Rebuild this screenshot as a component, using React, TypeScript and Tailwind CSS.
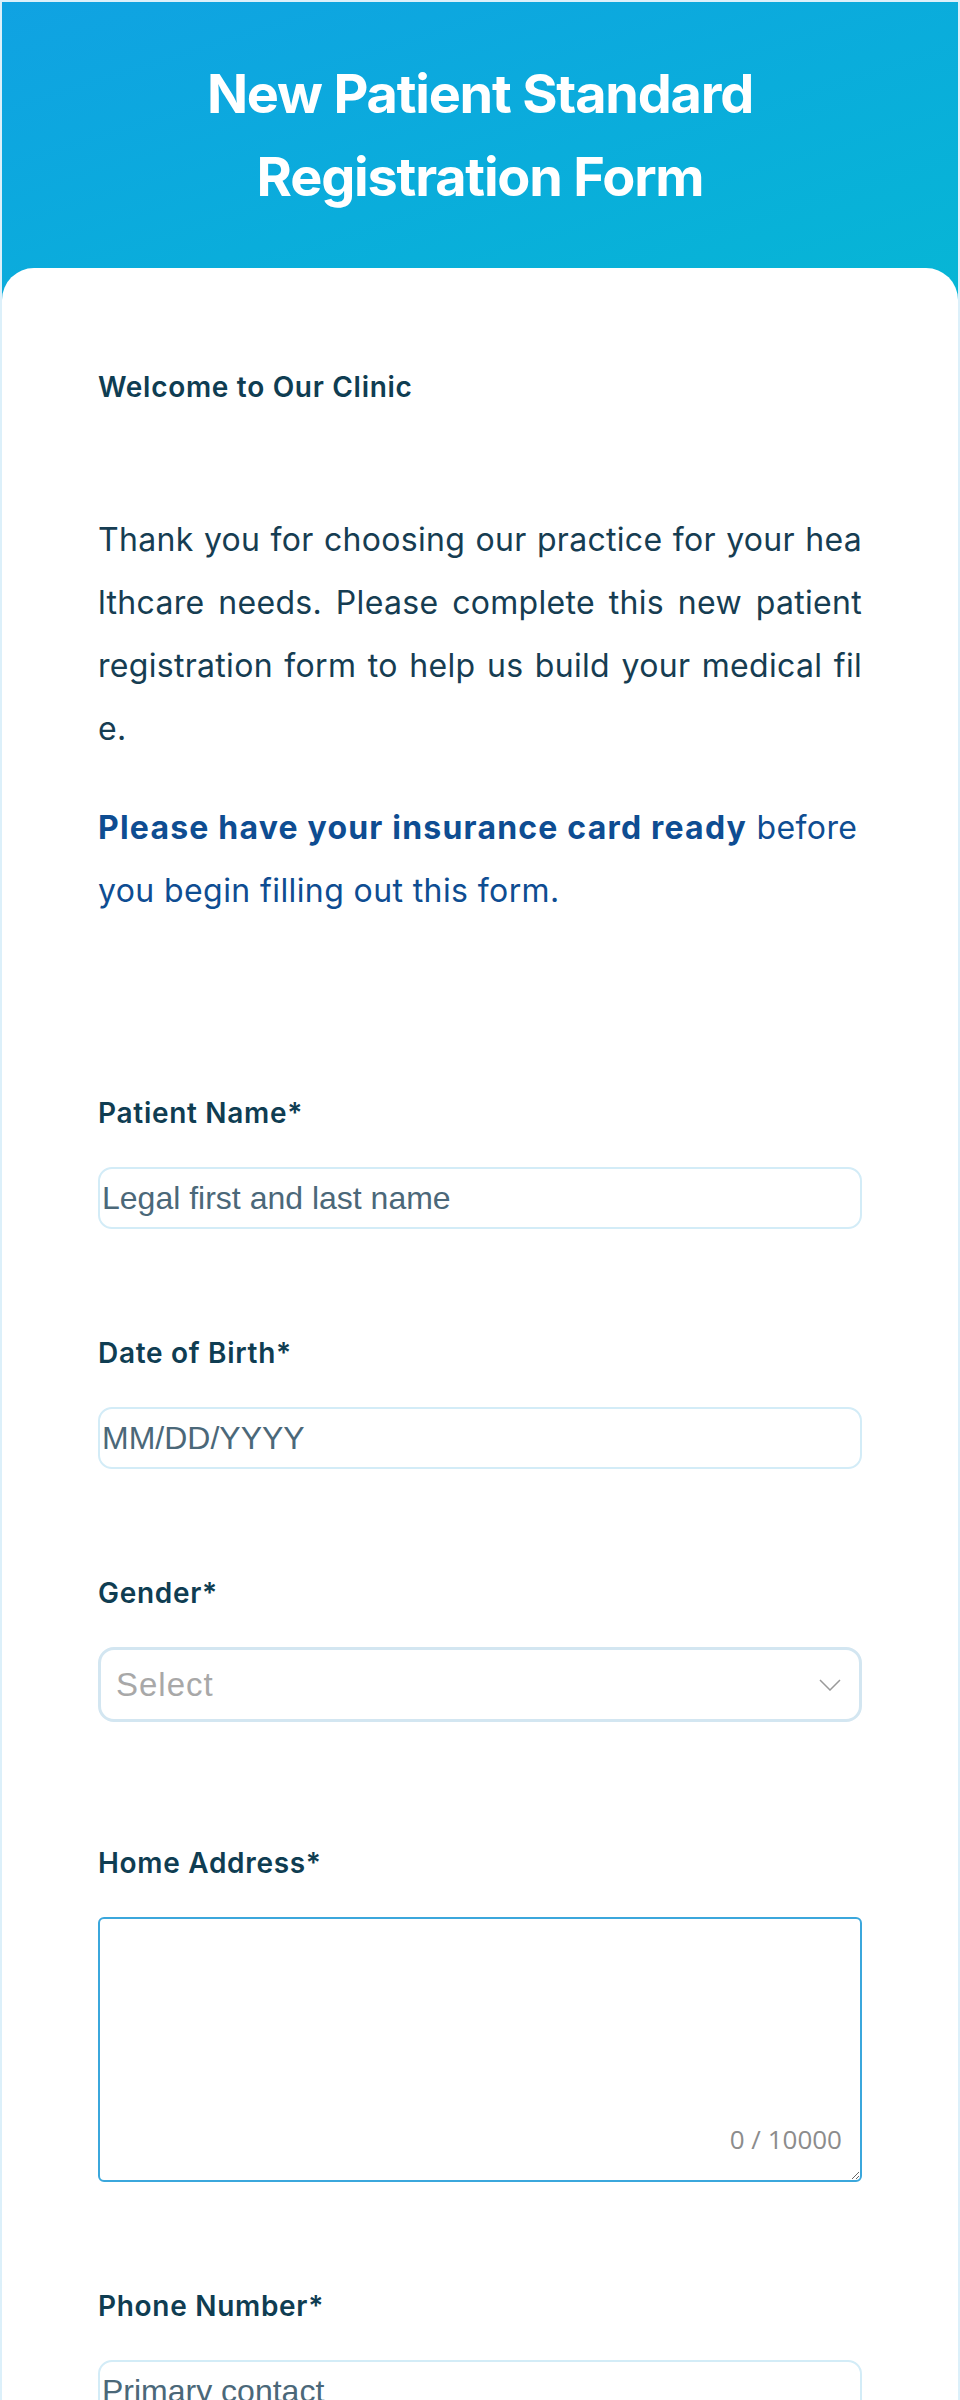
import React from 'react';

const labelCls = "block font-['Inter',sans-serif] text-[28px] leading-[42px] font-semibold tracking-[0.7px] text-[#0f3d52]";
const inputCls =
  "block w-full h-[62px] rounded-[14px] border-2 border-[#d3ecf7] bg-white px-[2px] font-['Liberation_Sans',Arial,sans-serif] text-[32px] text-[#163b4d] placeholder:text-[#4b6879] outline-none";

// the intro is wrapped character-wise, so each line is kept as its own row
const introLines = [
  'Thank you for choosing our practice for your hea',
  'lthcare needs. Please complete this new patient',
  'registration form to help us build your medical fil',
  'e.',
];

function Field({ label, children, className = '' }: { label: string; children: React.ReactNode; className?: string }) {
  return (
    <div className={className}>
      <label className={labelCls}>{label}</label>
      <div className="mt-[33px]">{children}</div>
    </div>
  );
}

export default function App() {
  return (
    <div className="min-h-screen bg-[#dcf0fa] px-[2px] pt-[2px]">
      {/* Header */}
      <div className="h-[298px] bg-linear-to-br from-[#10a2e2] to-[#07b6d5] pt-[50px] text-center">
        <h1 className="font-['Inter',sans-serif] text-[54px] leading-[83px] font-bold tracking-[-1.2px] text-white">
          New Patient Standard
          <br />
          Registration Form
        </h1>
      </div>

      {/* Form card */}
      <div className="relative -mt-[32px] rounded-t-[32px] bg-white px-[96px] pt-[98px] pb-[60px]">
        <h2 className={labelCls}>Welcome to Our Clinic</h2>

        <p className="mt-[100px] font-['Inter',sans-serif] text-[32px] leading-[63px] tracking-[0.3px] text-[#163d52]">
          {introLines.map((line, i) => (
            <span
              key={i}
              className={
                i < introLines.length - 1
                  ? 'block whitespace-nowrap text-justify [text-align-last:justify]'
                  : 'block whitespace-nowrap'
              }
            >
              {line}
            </span>
          ))}
        </p>

        <p className="mt-[36px] font-['Inter',sans-serif] text-[32px] leading-[63px] tracking-[0.4px] text-[#0e4d92]">
          <strong className="font-bold tracking-[1.2px]">Please have your insurance card ready</strong> before you begin filling out this form.
        </p>

        <Field label="Patient Name*" className="mt-[170px]">
          <input type="text" placeholder="Legal first and last name" className={inputCls} />
        </Field>

        <Field label="Date of Birth*" className="mt-[103px]">
          <input type="text" placeholder="MM/DD/YYYY" className={inputCls} />
        </Field>

        <Field label="Gender*" className="mt-[103px]">
          <div className="flex h-[75px] w-full items-center justify-between rounded-[16px] border-[3px] border-[#d3e6f1] bg-white pr-[18px] pl-[15px]">
            <span className="font-['Liberation_Sans',Arial,sans-serif] text-[33px] tracking-[1px] text-[#a8a8a8]">Select</span>
            <svg width="22" height="12" viewBox="0 0 22 12" fill="none" stroke="#9a9a9a" strokeWidth="1.5">
              <path d="M1 1l10 10L21 1" />
            </svg>
          </div>
        </Field>

        <Field label="Home Address*" className="mt-[120px]">
          <div className="relative">
            <textarea className="block h-[265px] w-full rounded-[6px] border-2 border-[#3ba7dc] bg-white p-3 font-['Liberation_Sans',Arial,sans-serif] text-[32px] text-[#163b4d] outline-none" />
            <span className="absolute right-[20px] bottom-[30px] font-['Open_Sans',sans-serif] text-[26px] leading-none text-[#8c8c8c]">
              0 / 10000
            </span>
          </div>
        </Field>

        <Field label="Phone Number*" className="mt-[103px]">
          <input type="tel" placeholder="Primary contact" className={inputCls} />
        </Field>
      </div>
    </div>
  );
}
